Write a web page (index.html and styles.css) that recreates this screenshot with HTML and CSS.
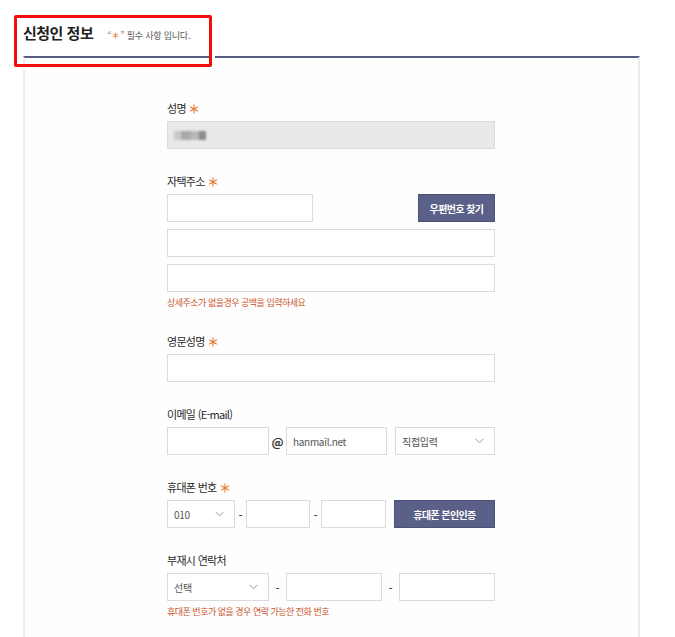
FILE: index.html
```html
<!DOCTYPE html>
<html lang="ko">
<head>
<meta charset="utf-8">
<link rel="stylesheet" href="styles.css">
</head>
<body>
<div class="page">
  <div class="header">
    <h2 class="title">신청인 정보</h2>
    <span class="note"><span class="q">“<svg class="ast small" viewBox="0 0 10 10"><path d="M5 0.6V9.4M1.2 2.8L8.8 7.2M1.2 7.2L8.8 2.8"/></svg>”</span> 필수 사항 입니다.</span>
  </div>
  <div class="highlight"></div>
  <div class="card">
    <div class="form">
      <div class="field">
        <div class="label">성명 <svg class="ast" viewBox="0 0 10 10"><path d="M5 0.6V9.4M1.2 2.8L8.8 7.2M1.2 7.2L8.8 2.8"/></svg></div>
        <div class="input disabled"><span class="blur"><i class="b1"></i><i class="b2"></i><i class="b3"></i><i class="b4"></i></span></div>
      </div>

      <div class="field">
        <div class="label">자택주소 <svg class="ast" viewBox="0 0 10 10"><path d="M5 0.6V9.4M1.2 2.8L8.8 7.2M1.2 7.2L8.8 2.8"/></svg></div>
        <div class="row between">
          <div class="input w146"></div>
          <div class="btn w77">우편번호 찾기</div>
        </div>
        <div class="input mt7"></div>
        <div class="input mt7"></div>
        <div class="hint">상세주소가 없을경우 공백을 입력하세요</div>
      </div>

      <div class="field">
        <div class="label">영문성명 <svg class="ast" viewBox="0 0 10 10"><path d="M5 0.6V9.4M1.2 2.8L8.8 7.2M1.2 7.2L8.8 2.8"/></svg></div>
        <div class="input"></div>
      </div>

      <div class="field">
        <div class="label">이메일 (E-mail)</div>
        <div class="row">
          <div class="input w102"></div>
          <span class="sep w17 at">@</span>
          <div class="input w101"><span class="val">hanmail.net</span></div>
          <span class="sep w8"></span>
          <div class="input select w100"><span class="val">직접입력</span><svg class="chev" width="9" height="6" viewBox="0 0 9 6"><path d="M0.5 0.8 L4.5 4.8 L8.5 0.8" fill="none" stroke="#999" stroke-width="1"/></svg></div>
        </div>
      </div>

      <div class="field">
        <div class="label">휴대폰 번호 <svg class="ast" viewBox="0 0 10 10"><path d="M5 0.6V9.4M1.2 2.8L8.8 7.2M1.2 7.2L8.8 2.8"/></svg></div>
        <div class="row">
          <div class="input select w68"><span class="val">010</span><svg class="chev" width="9" height="6" viewBox="0 0 9 6"><path d="M0.5 0.8 L4.5 4.8 L8.5 0.8" fill="none" stroke="#999" stroke-width="1"/></svg></div>
          <span class="sep w11">-</span>
          <div class="input w64"></div>
          <span class="sep w11">-</span>
          <div class="input w65"></div>
          <span class="sep w8"></span>
          <div class="btn w101">휴대폰 본인인증</div>
        </div>
      </div>

      <div class="field">
        <div class="label">부재시 연락처</div>
        <div class="row">
          <div class="input select w102"><span class="val">선택</span><svg class="chev" width="9" height="6" viewBox="0 0 9 6"><path d="M0.5 0.8 L4.5 4.8 L8.5 0.8" fill="none" stroke="#999" stroke-width="1"/></svg></div>
          <span class="sep w17">-</span>
          <div class="input w96"></div>
          <span class="sep w17">-</span>
          <div class="input w96"></div>
        </div>
        <div class="hint">휴대폰 번호가 없을 경우 연락 가능한 전화 번호</div>
      </div>
    </div>
  </div>
</div>
</body>
</html>
```

FILE: styles.css
```css
* { box-sizing: border-box; }
html, body { margin: 0; padding: 0; background: #fff; }
body {
  font-family: "Noto Sans CJK KR", "Noto Sans", sans-serif;
  color: #333;
  width: 675px;
  height: 637px;
  overflow: hidden;
}
.page { position: relative; padding-left: 23px; }
.header {
  display: flex;
  align-items: baseline;
  padding-top: 22px;
  height: 56px;
  width: 617px;
}
.title {
  margin: 0;
  font-size: 15px;
  line-height: 22px;
  font-weight: 700;
  color: #222;
  letter-spacing: -0.5px;
}
.note {
  margin-left: 14px;
  font-size: 9px;
  color: #555;
  letter-spacing: -0.2px;
}
.note .q { color: #777; }
.ast {
  width: 10px;
  height: 10px;
  vertical-align: -1px;
  fill: none;
  stroke: #e8782f;
  stroke-width: 1.1;
  margin-left: 1px;
}
.ast.small { width: 7px; height: 7px; vertical-align: 0; margin: 0 1px; }
.highlight {
  position: absolute;
  left: 14px;
  top: 15px;
  width: 198px;
  height: 52px;
  border: 3px solid #f20d0d;
  border-radius: 2px;
  box-shadow: 0 0 0 3px #fff;
}
.card {
  width: 617px;
  height: 600px;
  border-top: 2px solid #575c82;
  border-left: 2px solid #ececec;
  border-right: 2px solid #ececec;
  background: #fefefe;
  padding-top: 42px;
  padding-left: 142px;
}
.form { width: 328px; }
.field { margin-bottom: 24px; }
.label {
  font-size: 11px;
  line-height: 16px;
  height: 16px;
  margin-bottom: 5px;
  color: #2a2a2a;
  letter-spacing: -0.7px;
  white-space: nowrap;
}
.input {
  height: 28px;
  border: 1px solid #dadada;
  background: #fff;
  display: flex;
  align-items: center;
  padding-left: 6px;
}
.input.disabled { background: #e9e9e9; border-color: #dcdcdc; }
.mt7 { margin-top: 7px; }
.row { display: flex; align-items: center; }
.row.between { justify-content: space-between; }
.btn {
  height: 28px;
  background: #5b6089;
  border: 1px solid #4c5178;
  color: #fff;
  font-size: 10px;
  font-weight: 700;
  display: flex;
  align-items: center;
  justify-content: center;
  letter-spacing: -0.6px;
}
.sep {
  flex: none;
  text-align: center;
  font-size: 12px;
  color: #333;
}
.sep.at { font-weight: 700; font-size: 12px; }
.val { font-size: 10px; color: #555; letter-spacing: -0.3px; }
.select { justify-content: space-between; padding-right: 10px; }
.chev { flex: none; }
.hint {
  margin-top: 5px;
  font-size: 9px;
  line-height: 12px;
  color: #c9552a;
  letter-spacing: -0.5px;
}
.blur { display: flex; filter: blur(1.2px); height: 9px; }
.blur i { display: block; height: 9px; }
.blur i.b1 { width: 7px; background: #c8c8c8; }
.blur i.b2 { width: 10px; background: #aaa; }
.blur i.b3 { width: 8px; background: #b9b9b9; }
.blur i.b4 { width: 7px; background: #8c8c8c; }
.w146 { width: 146px; flex: none; }
.w77 { width: 77px; flex: none; }
.w102 { width: 102px; flex: none; }
.w101 { width: 101px; flex: none; }
.w100 { width: 100px; flex: none; }
.w96 { width: 96px; flex: none; }
.w68 { width: 68px; flex: none; }
.w65 { width: 65px; flex: none; }
.w64 { width: 64px; flex: none; }
.w17 { width: 17px; }
.w11 { width: 11px; }
.w8 { width: 8px; }
```
